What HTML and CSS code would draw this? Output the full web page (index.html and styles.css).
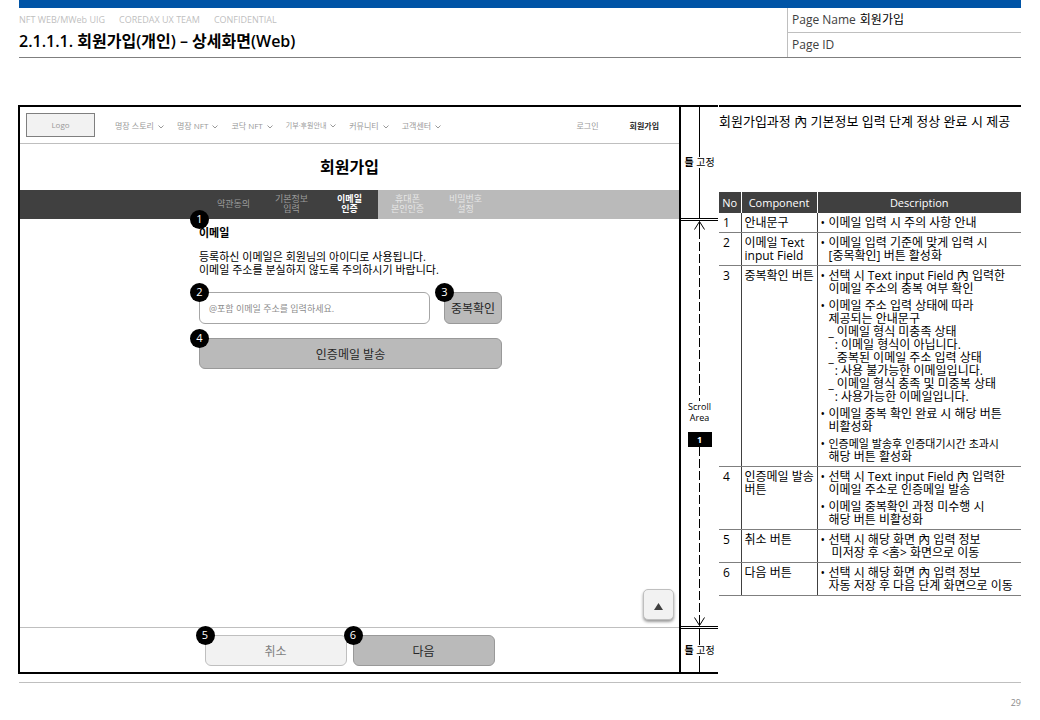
FILE: index.html
```html
<!DOCTYPE html>
<html lang="ko">
<head>
  <meta charset="UTF-8">
  <meta name="viewport" content="width=device-width, initial-scale=1.0">
  <title>회원가입(개인) – 상세화면(Web)</title>
  <link rel="stylesheet" href="styles.css">
</head>
<body>
  <header class="sheet-header">
    <div class="sheet-title">
      <p class="doc-info"><span>NFT WEB/MWeb UIG</span><span>COREDAX UX TEAM</span><span>CONFIDENTIAL</span></p>
      <h1>2.1.1.1. 회원가입(개인) – 상세화면(Web)</h1>
    </div>
    <dl class="page-info">
      <div><dt>Page Name</dt><dd>회원가입</dd></div>
      <div><dt>Page ID</dt><dd></dd></div>
    </dl>
  </header>

  <main class="board">
    <div class="frame">
      <section class="screen">
        <nav class="gnb">
          <a class="logo" href="#">Logo</a>
          <div class="menu">
            <a href="#">명장 스토리 <svg viewBox="0 0 6 4"><path d="M.5 .5 3 3 5.5 .5"/></svg></a>
            <a href="#">명장 NFT <svg viewBox="0 0 6 4"><path d="M.5 .5 3 3 5.5 .5"/></svg></a>
            <a href="#">코닥 NFT <svg viewBox="0 0 6 4"><path d="M.5 .5 3 3 5.5 .5"/></svg></a>
            <a class="small" href="#">기부·후원안내 <svg viewBox="0 0 6 4"><path d="M.5 .5 3 3 5.5 .5"/></svg></a>
            <a href="#">커뮤니티 <svg viewBox="0 0 6 4"><path d="M.5 .5 3 3 5.5 .5"/></svg></a>
            <a href="#">고객센터 <svg viewBox="0 0 6 4"><path d="M.5 .5 3 3 5.5 .5"/></svg></a>
          </div>
          <div class="member">
            <a href="#">로그인</a>
            <a class="on" href="#">회원가입</a>
          </div>
        </nav>

        <h2 class="screen-title">회원가입</h2>

        <ol class="steps">
          <li>약관동의</li>
          <li>기본정보<br>입력</li>
          <li class="current">이메일<br>인증</li>
          <li class="next">휴대폰<br>본인인증</li>
          <li class="next">비밀번호<br>설정</li>
        </ol>

        <div class="content">
          <form class="email-form">
            <span class="num">1</span>
            <label class="form-title" for="email">이메일</label>
            <p class="guide">등록하신 이메일은 회원님의 아이디로 사용됩니다.<br>이메일 주소를 분실하지 않도록 주의하시기 바랍니다.</p>
            <div class="field-row">
              <div class="field">
                <span class="num">2</span>
                <input type="email" id="email" placeholder="@포함 이메일 주소를 입력하세요.">
              </div>
              <div class="check">
                <span class="num">3</span>
                <button class="btn" type="button">중복확인</button>
              </div>
            </div>
            <div class="send">
              <span class="num">4</span>
              <button class="btn" type="button">인증메일 발송</button>
            </div>
          </form>
          <button class="to-top" type="button" aria-label="맨 위로">
            <svg viewBox="0 0 9 7"><path d="M4.500 0 9 7H0z"/></svg>
          </button>
        </div>

        <div class="actions">
          <div class="action">
            <span class="num">5</span>
            <button class="btn light" type="button">취소</button>
          </div>
          <div class="action">
            <span class="num">6</span>
            <button class="btn" type="button">다음</button>
          </div>
        </div>
      </section>

      <aside class="rail">
        <div class="rail-fixed rail-top">
          <i class="line"></i>
          <span><b>틀</b> 고정</span>
          <i class="line"></i>
        </div>
        <div class="rail-scroll">
          <svg class="arrow" viewBox="0 0 11 9"><path d="M.5 8.500 5.500 .5 10.500 8.500M5.500 .5V9"/></svg>
          <i class="line dashed"></i>
          <span>Scroll<br>Area</span>
          <strong>1</strong>
          <i class="line dashed"></i>
          <svg class="arrow" viewBox="0 0 11 9"><path d="M.5 .5 5.500 8.500 10.500 .5M5.500 0V8.500"/></svg>
        </div>
        <div class="rail-fixed rail-bottom">
          <i class="line"></i>
          <span><b>틀</b> 고정</span>
          <i class="line"></i>
        </div>
      </aside>
    </div>

    <section class="spec">
      <p class="summary">회원가입과정 內 기본정보 입력 단계 정상 완료 시 제공</p>
      <table>
        <thead>
          <tr><th class="no">No</th><th class="component">Component</th><th>Description</th></tr>
        </thead>
        <tbody>
          <tr>
            <td>1</td>
            <td>안내문구</td>
            <td><ul><li>이메일 입력 시 주의 사항 안내</li></ul></td>
          </tr>
          <tr>
            <td>2</td>
            <td>이메일 Text<br>input Field</td>
            <td><ul><li>이메일 입력 기준에 맞게 입력 시<br>[중목확인] 버튼 활성화</li></ul></td>
          </tr>
          <tr>
            <td>3</td>
            <td>중복확인 버튼</td>
            <td>
              <ul>
                <li>선택 시 Text input Field 內 입력한<br>이메일 주소의 중복 여부 확인</li>
                <li>이메일 주소 입력 상태에 따라<br>제공되는 안내문구<br>
                  _ 이메일 형식 미충족 상태<br>
                  &nbsp; : 이메일 형식이 아닙니다.<br>
                  _ 중복된 이메일 주소 입력 상태<br>
                  &nbsp; : 사용 불가능한 이메일입니다.<br>
                  _ 이메일 형식 충족 및 미중복 상태<br>
                  &nbsp; : 사용가능한 이메일입니다.</li>
                <li>이메일 중복 확인 완료 시 해당 버튼<br>비활성화</li>
                <li><span class="tight">인증메일 발송후 인증대기시간 초과시</span><br>해당 버튼 활성화</li>
              </ul>
            </td>
          </tr>
          <tr>
            <td>4</td>
            <td>인증메일 발송<br>버튼</td>
            <td>
              <ul>
                <li>선택 시 Text input Field 內 입력한<br>이메일 주소로 인증메일 발송</li>
                <li>이메일 중복확인 과정 미수행 시<br>해당 버튼 비활성화</li>
              </ul>
            </td>
          </tr>
          <tr>
            <td>5</td>
            <td>취소 버튼</td>
            <td><ul><li>선택 시 해당 화면 內 입력 정보<br>&nbsp;미저장 후 &lt;홈&gt; 화면으로 이동</li></ul></td>
          </tr>
          <tr>
            <td>6</td>
            <td>다음 버튼</td>
            <td><ul><li>선택 시 해당 화면 內 입력 정보<br>자동 저장 후 다음 단계 화면으로 이동</li></ul></td>
          </tr>
        </tbody>
      </table>
    </section>
  </main>

  <footer class="sheet-footer">29</footer>
</body>
</html>
```
FILE: styles.css
```css
* {
  box-sizing: border-box;
}
body {
  display: flex;
  flex-direction: column;
  min-height: 100vh;
  margin: 0;
  padding: 0 19px 0 18px;
  background: #fff;
  color: #000;
  font-family: "Open Sans", "Noto Sans CJK KR", sans-serif;
  font-size: 12px;
  line-height: 13px;
}
h1, h2, p, dl, dd, ol, ul {
  margin: 0;
  padding: 0;
}
ol, ul {
  list-style: none;
}
a {
  color: inherit;
  text-decoration: none;
}
button, input {
  font-family: inherit;
}

/* sheet header */
.sheet-header {
  display: flex;
  justify-content: space-between;
  height: 58px;
  margin-left: 1px;
  border-top: 8px solid #0054a6;
  border-bottom: 1px solid #7f7f7f;
}
.doc-info {
  display: flex;
  gap: 14px;
  padding-top: 5px;
  color: #bfbfbf;
  font-size: 9px;
}
.sheet-title h1 {
  padding-top: 3px;
  font-size: 16px;
  font-weight: 600;
  line-height: 24px;
}
.page-info {
  width: 234px;
  border-left: 1px solid #bfbfbf;
  line-height: 24px;
}
.page-info div {
  display: flex;
  gap: 4px;
  height: 25px;
  padding-left: 4px;
}
.page-info div:first-child {
  border-bottom: 1px solid #bfbfbf;
}
.page-info dt {
  color: #404040;
}

.board {
  flex: 1;
  display: flex;
  gap: 1px;
  margin-top: 47px;
}
.frame {
  flex: 1;
  display: flex;
  border-top: 2px solid #000;
  border-bottom: 2px solid #000;
}

/* wireframe screen */
.screen {
  flex: 1;
  display: flex;
  flex-direction: column;
  border-left: 2px solid #000;
  border-right: 2px solid #000;
}
.gnb {
  display: flex;
  align-items: center;
  height: 37px;
  padding: 0 20px 0 6px;
  border-bottom: 1px solid #bfbfbf;
  color: #999;
  font-size: 8px;
}
.logo {
  width: 69px;
  border: 1px solid #7f7f7f;
  background: #f2f2f2;
  line-height: 22px;
  text-align: center;
}
.menu {
  display: flex;
  gap: 13px;
  margin-left: 20px;
}
.menu svg {
  width: 6px;
  height: 4px;
  margin-left: 2px;
  fill: none;
  stroke: #999;
}
.menu .small {
  font-size: 7px;
}
.member {
  display: flex;
  gap: 31px;
  margin-left: auto;
}
.member .on {
  color: #262626;
  font-weight: bold;
}
.screen-title {
  font-size: 16px;
  font-weight: 600;
  line-height: 46px;
  text-align: center;
}
.steps {
  display: flex;
  justify-content: center;
  height: 29px;
  background: linear-gradient(to right, #404040 calc(50% + 29px), #bababa calc(50% + 29px));
  color: #9c9c9c;
  font-size: 9px;
  line-height: 10px;
}
.steps li {
  display: flex;
  align-items: center;
  justify-content: center;
  width: 58px;
  padding-bottom: 2px;
  text-align: center;
}
.steps .current {
  color: #fff;
  font-weight: bold;
}
.steps .next {
  color: #e6e6e6;
}

.content {
  flex: 1;
  display: flex;
  flex-direction: column;
  justify-content: space-between;
  padding-left: 2px;
}
.email-form {
  position: relative;
  width: 303px;
  margin: 0 auto;
  padding-top: 7px;
  font-size: 11px;
}
.form-title {
  display: block;
  font-weight: bold;
}
.guide {
  margin: 11px 0 16px;
}
.field-row {
  display: flex;
  gap: 14px;
  margin-bottom: 14px;
}
.field {
  flex: 1;
}
.check {
  width: 58px;
}
.field, .check, .send, .action {
  position: relative;
}
.field input {
  display: block;
  width: 100%;
  height: 32px;
  padding: 0 9px;
  border: 1px solid #a6a6a6;
  border-radius: 6px;
  font-size: 9px;
}
.field input::placeholder {
  color: #8c8c8c;
}
.btn {
  display: block;
  width: 100%;
  height: 31px;
  padding: 0;
  border: 1px solid #999;
  border-radius: 6px;
  background: #bababa;
  color: #262626;
  font-size: 12px;
}
.check .btn {
  height: 32px;
}
.btn.light {
  border-color: #bfbfbf;
  background: #f2f2f2;
  color: #7f7f7f;
}

/* callout numbers sit on the corner of their component */
.num {
  position: absolute;
  top: -9px;
  left: -9px;
  width: 19px;
  height: 19px;
  border-radius: 50%;
  background: #000;
  color: #fff;
  font-size: 11px;
  line-height: 18px;
  text-align: center;
}
.to-top {
  align-self: flex-end;
  width: 31px;
  height: 31px;
  margin: 0 5px 7px 0;
  padding: 0;
  border: 1px solid #bfbfbf;
  border-radius: 5px;
  background: #f2f2f2;
  box-shadow: 0 2px 3px rgba(0, 0, 0, 0.4);
}
.to-top svg {
  width: 9px;
  height: 7px;
  fill: #404040;
}
.actions {
  display: flex;
  justify-content: center;
  gap: 6px;
  padding: 7px 0 6px;
  border-top: 1px solid #bfbfbf;
}
.action {
  width: 142px;
}

/* fixed / scroll area guide */
.rail {
  display: flex;
  flex-direction: column;
  width: 37px;
  font-size: 9px;
  line-height: 11px;
  text-align: center;
}
.rail-fixed, .rail-scroll {
  display: flex;
  flex-direction: column;
  align-items: center;
}
.rail-fixed {
  font-size: 10px;
}
.rail-top {
  height: 114px;
  border-bottom: 3px double #000;
}
.rail-bottom {
  height: 46px;
  border-top: 3px double #000;
}
.rail-scroll {
  flex: 1;
}
.line {
  flex: 1;
  width: 1px;
  background: #000;
}
.line.dashed {
  background: repeating-linear-gradient(#000 0 9px, transparent 9px 12px);
}
.arrow {
  width: 11px;
  height: 9px;
  fill: none;
  stroke: #000;
}
.rail strong {
  width: 24px;
  margin-top: 9px;
  background: #000;
  color: #fff;
  line-height: 15px;
}

/* description table */
.spec {
  width: 302px;
  border-top: 2px solid #000;
}
.summary {
  margin: 5px 0 62px;
  font-size: 13px;
  line-height: 18px;
  white-space: nowrap;
}
table {
  width: 100%;
  border-collapse: collapse;
  table-layout: fixed;
}
th {
  height: 21px;
  padding: 0;
  background: #404040;
  color: #fff;
  font-size: 11px;
  font-weight: normal;
}
th + th {
  border-left: 1px solid #fff;
}
.no {
  width: 22px;
}
.component {
  width: 76px;
}
td {
  padding: 3px 0 3px 4px;
  border-bottom: 1px solid #7f7f7f;
  vertical-align: top;
  white-space: nowrap;
}
td + td {
  padding-left: 3px;
  border-left: 1px solid #404040;
}
td li {
  padding-left: 8px;
}
td li::before {
  content: "•";
  float: left;
  margin-left: -8px;
}
td li + li {
  margin-top: 4px;
}
.tight {
  font-size: 11px;
}

.sheet-footer {
  margin: 8px 0 0 1px;
  padding: 13px 0 11px;
  border-top: 1px solid #bfbfbf;
  color: #8c8c8c;
  font-size: 9px;
  text-align: right;
}
```
